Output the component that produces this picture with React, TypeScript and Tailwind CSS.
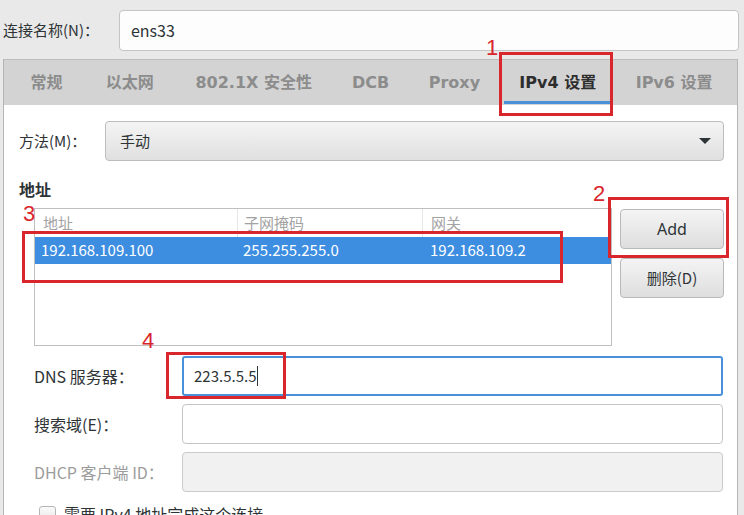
import React from "react";

const cjk = { fontFamily: '"Noto Sans CJK SC", "Noto Sans", sans-serif' };
const tabFont = { fontFamily: '"DejaVu Sans", "Noto Sans CJK SC", sans-serif' };

function Annot({ n, box, num }: { n: string; box: [number, number, number, number]; num: [number, number] }) {
  return (
    <>
      <div
        className="absolute border-[3px] border-[#d9262c] pointer-events-none"
        style={{ left: box[0], top: box[1], width: box[2], height: box[3] }}
      />
      <div
        className="absolute text-[22px] leading-none text-[#d9262c]"
        style={{ left: num[0], top: num[1], fontFamily: '"Liberation Sans", sans-serif' }}
      >
        {n}
      </div>
    </>
  );
}

const tabs: [string, number, boolean][] = [
  ["常规", 85, false],
  ["以太网", 82, false],
  ["802.1X 安全性", 166, false],
  ["DCB", 68, false],
  ["Proxy", 100, false],
  ["IPv4 设置", 107, true],
  ["IPv6 设置", 126, false],
];

export default function App() {
  return (
    <div className="relative w-[744px] h-[515px] overflow-hidden bg-[#e9e9e9] text-[#2e3436]" style={cjk}>
      {/* connection name */}
      <div className="flex items-center h-[59px] pl-[3px] pr-[5px] pt-[1px]">
        <div className="w-[116px] text-[15px]">连接名称(N)：</div>
        <div className="flex-1 h-[41px] flex items-center pl-[11px] bg-[#fdfdfd] border border-[#c4c4c4] rounded-[4px] text-[16px]">
          ens33
        </div>
      </div>

      {/* notebook */}
      <div className="ml-[3px] w-[735px] h-[456px] flex flex-col border-l border-r border-[#b5b5b5] bg-white">
        <div className="shrink-0 flex h-[46px] bg-[#d3d3d3] border-t border-[#bdbdbd]" style={tabFont}>
          {tabs.map(([t, w, active]) => (
            <div
              key={t}
              className={
                "flex items-center justify-center text-[16px] font-bold relative " +
                (active ? "text-[#2e2e2e]" : "text-[#8c8c8c]")
              }
              style={{ width: w }}
            >
              {t}
              {active && <div className="absolute left-0 right-0 bottom-[1px] h-[3px] bg-[#4a90d9]" />}
            </div>
          ))}
        </div>

        <div className="shrink-0 flex flex-col pt-[16px]">
          {/* method */}
          <div className="flex items-center pl-[15px]">
            <div className="w-[86px] text-[15px]">方法(M)：</div>
            <div className="w-[619px] h-[40px] flex items-center justify-between pl-[14px] pr-[12px] rounded-[4px] border border-[#bdbdbd] bg-gradient-to-b from-[#f4f4f4] to-[#e0e0e0] text-[15px]">
              <span>手动</span>
              <svg width="12" height="7" viewBox="0 0 12 7">
                <path d="M0 0 L12 0 L6 6 Z" fill="#2e3436" />
              </svg>
            </div>
          </div>

          {/* address title */}
          <div className="pl-[15px] mt-[18px] text-[16px] font-bold leading-[20px]">地址</div>

          <div className="flex mt-[9px] pl-[30px]">
            {/* table */}
            <div className="w-[578px] h-[138px] border border-[#c0c0c0] bg-white text-[15px]">
              <div className="flex h-[28px] text-[#a3a3a3]">
                <div className="w-[203px] pl-[8px] flex items-center border-r border-[#e6e6e6]">地址</div>
                <div className="w-[185px] pl-[6px] flex items-center border-r border-[#e6e6e6]">子网掩码</div>
                <div className="flex-1 pl-[8px] flex items-center">网关</div>
              </div>
              <div className="flex h-[27px] bg-[#3d8ee1] text-white">
                <div className="w-[203px] pl-[6px] flex items-center">192.168.109.100</div>
                <div className="w-[185px] pl-[5px] flex items-center">255.255.255.0</div>
                <div className="flex-1 pl-[7px] flex items-center">192.168.109.2</div>
              </div>
            </div>

            {/* buttons */}
            <div className="flex flex-col gap-[9px] ml-[8px] mt-[1px]">
              <div className="w-[104px] h-[40px] flex items-center justify-center rounded-[4px] border border-[#b9b9b9] bg-gradient-to-b from-[#f4f4f4] to-[#dedede] text-[16px]" style={{ fontFamily: '"Noto Sans", sans-serif' }}>
                Add
              </div>
              <div className="w-[104px] h-[40px] flex items-center justify-center rounded-[4px] border border-[#b9b9b9] bg-gradient-to-b from-[#f4f4f4] to-[#dedede] text-[15px]">
                删除(D)
              </div>
            </div>
          </div>

          {/* dns etc */}
          <div className="flex flex-col gap-[8px] mt-[10px] pl-[30px]">
            <div className="flex items-center">
              <div className="w-[148px] text-[16px]">DNS 服务器：</div>
              <div className="w-[541px] h-[40px] flex items-center pl-[10px] rounded-[3px] border-2 border-[#4a90d9] bg-white text-[15px]">
                <span>223.5.5.5</span>
                <span className="w-[1px] h-[20px] bg-[#2e3436] ml-[1px]" />
              </div>
            </div>
            <div className="flex items-center">
              <div className="w-[148px] text-[16px]">搜索域(E)：</div>
              <div className="w-[541px] h-[40px] rounded-[4px] border border-[#c4c4c4] bg-white" />
            </div>
            <div className="flex items-center">
              <div className="w-[148px] text-[16px] text-[#9c9c9c]">DHCP 客户端 ID：</div>
              <div className="w-[541px] h-[40px] rounded-[4px] border border-[#cacaca] bg-[#f1f1f1]" />
            </div>
            <div className="flex items-center pl-[5px] mt-[2px]">
              <div className="w-[17px] h-[17px] rounded-[3px] border border-[#b5b5b5] bg-gradient-to-b from-[#fafafa] to-[#e6e6e6]" />
              <div className="ml-[8px] text-[16px]">需要 IPv4 地址完成这个连接</div>
            </div>
          </div>
        </div>
      </div>

      {/* annotations */}
      <Annot n="1" box={[499, 52, 114, 64]} num={[486, 37]} />
      <Annot n="2" box={[608, 197, 121, 61]} num={[593, 183]} />
      <Annot n="3" box={[22, 231, 541, 52]} num={[23, 203]} />
      <Annot n="4" box={[166, 352, 120, 47]} num={[142, 330]} />
    </div>
  );
}
